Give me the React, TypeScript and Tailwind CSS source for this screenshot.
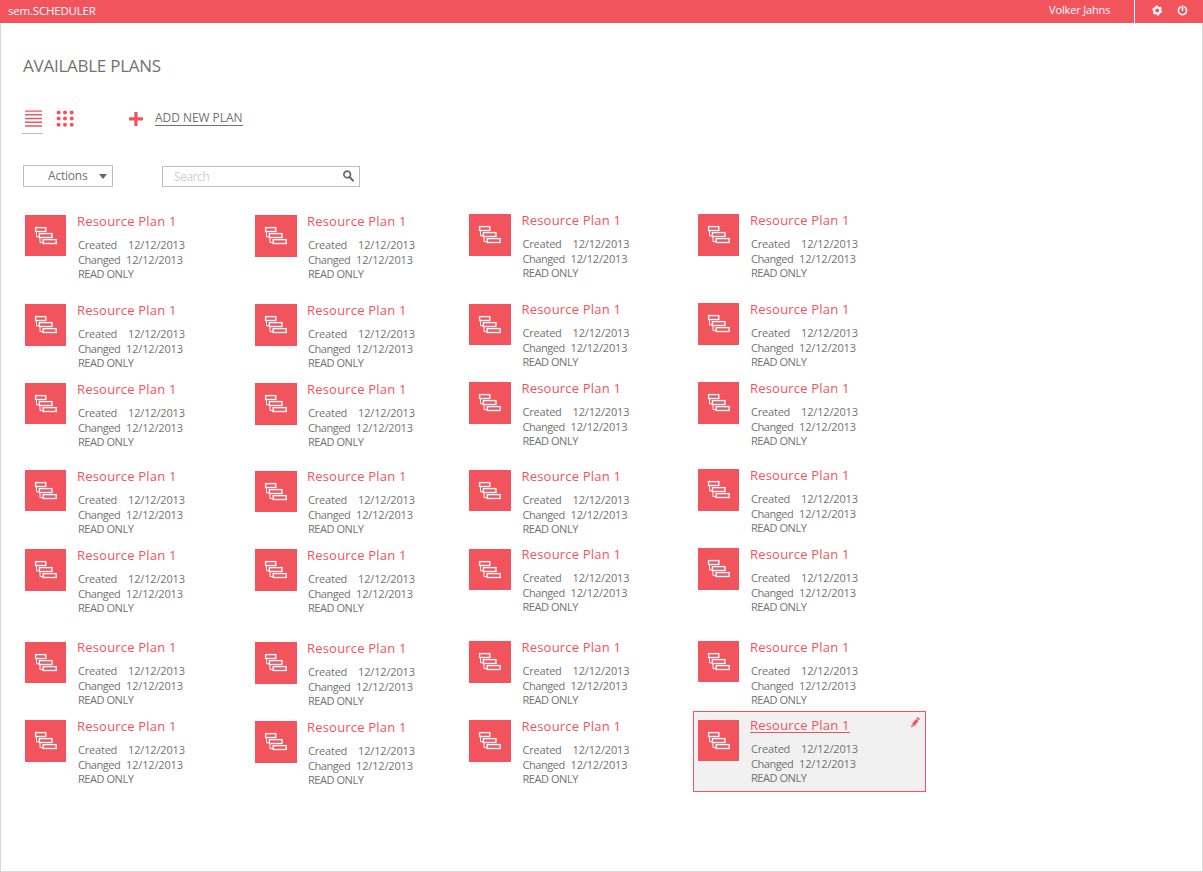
type Slot = { row: string; icon: string };

const columns: { wrap: string; text: string; slots: Slot[] }[] = [
  {
    wrap: "w-[230px] pt-px",
    text: "ml-[11px]",
    slots: [
      { row: "h-[89px]", icon: "h-[41px] w-[41px]" },
      { row: "h-[79px]", icon: "h-[42px] w-[41px]" },
      { row: "h-[87px]", icon: "h-[41px] w-[41px]" },
      { row: "h-[79px]", icon: "h-[41px] w-[41px]" },
      { row: "h-[92px]", icon: "h-[42px] w-[41px]" },
      { row: "h-[79px]", icon: "mt-px h-[41px] w-[41px]" },
      { row: "h-[79px]", icon: "h-[42px] w-[41px]" },
    ],
  },
  {
    wrap: "w-[214px] pt-px",
    text: "ml-[10px]",
    slots: [
      { row: "h-[89px]", icon: "h-[42px] w-[42px]" },
      { row: "h-[79px]", icon: "h-[42px] w-[42px]" },
      { row: "h-[87px]", icon: "h-[42px] w-[42px]" },
      { row: "h-[79px]", icon: "mt-px h-[41px] w-[42px]" },
      { row: "h-[93px]", icon: "h-[42px] w-[42px]" },
      { row: "h-[79px]", icon: "h-[42px] w-[42px]" },
      { row: "h-[79px]", icon: "h-[42px] w-[42px]" },
    ],
  },
  {
    wrap: "w-[229px]",
    text: "ml-[10.5px]",
    slots: [
      { row: "h-[89px]", icon: "h-[42px] w-[42px]" },
      { row: "h-[79px]", icon: "mt-px h-[41px] w-[42px]" },
      { row: "h-[88px]", icon: "h-[42px] w-[42px]" },
      { row: "h-[78px]", icon: "h-[41px] w-[42px]" },
      { row: "h-[93px]", icon: "mt-px h-[41px] w-[42px]" },
      { row: "h-[79px]", icon: "h-[42px] w-[42px]" },
      { row: "h-[79px]", icon: "h-[42px] w-[42px]" },
    ],
  },
  {
    wrap: "w-[233px]",
    text: "ml-[11px]",
    slots: [
      { row: "h-[89px]", icon: "h-[42px] w-[41px]" },
      { row: "h-[79px]", icon: "h-[42px] w-[41px]" },
      { row: "h-[87px]", icon: "h-[42px] w-[41px]" },
      { row: "h-[79px]", icon: "h-[42px] w-[41px]" },
      { row: "h-[93px]", icon: "h-[42px] w-[41px]" },
      { row: "h-[78px]", icon: "h-[41px] w-[41px]" },
      { row: "h-[81px]", icon: "h-[41px] w-[41px]" },
    ],
  },
];

function PlanIcon({ size }: { size: string }) {
  return (
    <div className={`${size} shrink-0 overflow-hidden bg-[#f2545e]`}>
      <svg width="42" height="42" viewBox="0 0 42 42" fill="none" stroke="#fff" strokeWidth="1.35">
        <path d="M11.5 17v4.8h3M15 23v4.6h3" strokeWidth="1" />
        <rect x="10.6" y="12.6" width="10.2" height="3.9" />
        <rect x="14.4" y="18.6" width="12.6" height="3.9" />
        <rect x="18.2" y="24.6" width="13" height="3.9" />
      </svg>
    </div>
  );
}

function Plan({ slot, text, selected }: { slot: Slot; text: string; selected: boolean }) {
  return (
    <article
      className={
        selected
          ? `${slot.row} relative -ml-[5px] -mt-2 flex w-[233px] border border-[#f2545e] bg-[#f1f1f1] pl-1 pt-2`
          : `${slot.row} flex`
      }
    >
      <PlanIcon size={slot.icon} />
      <div className={`${text} ${selected ? "-mt-px" : ""} text-[11px] text-[#727272]`}>
        <h2 className="h-[22px] whitespace-nowrap text-[13px] leading-[13px] tracking-[0.2px] text-[#f2545e]">
          <span className={selected ? "inline-block h-[14px] border-b border-[#f2545e]" : ""}>Resource Plan 1</span>
        </h2>
        <div className="ml-px flex h-[15px] leading-[15px]">
          <span className="w-[50px] tracking-[-0.2px]">Created</span>
          <span className="tracking-[-0.15px]">12/12/2013</span>
        </div>
        <div className="ml-px flex h-[15px] leading-[15px]">
          <span className="w-[48px] tracking-[-0.45px]">Changed</span>
          <span className="tracking-[-0.15px]">12/12/2013</span>
        </div>
        <div className="ml-px h-[15px] whitespace-nowrap leading-[14px] tracking-[-0.45px]">READ ONLY</div>
      </div>
      {selected && (
        <svg className="absolute right-[5px] top-[5px]" width="9" height="11" viewBox="0 0 9 11" fill="#f2545e">
          <path d="M5.4 1.4 6.4 0 9 1.9 8 3.3zM4.9 2 7.5 3.9 3.7 9 1 7zM.7 7.6 2.9 9.3.2 10.6z" />
        </svg>
      )}
    </article>
  );
}

export default function App() {
  return (
    <div className="flex h-[872px] w-[1203px] flex-col overflow-hidden bg-white font-['Open_Sans','Noto_Sans',sans-serif] text-[#727272]">
      <header className="flex h-[23px] shrink-0 items-center bg-[#f2545e] text-[11px] text-white">
        <span className="ml-[8px] pb-px text-[11.5px] tracking-[-0.2px]">sem.SCHEDULER</span>
        <span className="ml-auto w-[85px] pb-[2px] tracking-[-0.15px]">Volker Jahns</span>
        <div className="flex h-full w-[69px] items-center border-l border-white pb-[2px] pl-[17px]">
          <svg width="11" height="11" viewBox="0 0 11 11">
            <circle cx="5.2" cy="5.5" r="3" fill="none" stroke="#fff" strokeWidth="2" />
            <circle cx="5.2" cy="5.5" r="4.3" fill="none" stroke="#fff" strokeWidth="1.4" strokeDasharray="2.2 2.3" />
          </svg>
          <svg className="ml-[14px]" width="11" height="11" viewBox="0 0 11 11" fill="none" stroke="#fff" strokeWidth="1.6" strokeLinecap="round">
            <path d="M3.2 2.2a4.1 4.1 0 1 0 4.6 0M5.5 1v4.3" />
          </svg>
        </div>
      </header>
      <main className="flex grow flex-col border-x border-b border-[#d8d8d8]">
        <h1 className="ml-[22px] mt-[31px] h-6 text-[17px] leading-6 tracking-[-0.25px]">AVAILABLE PLANS</h1>
        <nav className="ml-[21px] mt-[27px] flex h-[29px]">
          <div className="flex h-[29px] w-[21px] justify-center border-b border-[#bdbdbd] pl-px pt-[5px]">
            <svg width="17" height="17" viewBox="0 0 17 17" fill="#f2545e">
              <path d="M0 .4h17v1.4H0zM0 4h17v1.6H0zM0 7.7h17v1.6H0zM0 11.4h17V13H0zM0 15.2h17v1.5H0z" />
            </svg>
          </div>
          <svg className="ml-[13px] mt-[5px]" width="19" height="18" viewBox="0 0 19 18" fill="#f2545e">
            {[2.6, 9, 15.7].map((x) => [2.5, 8.6, 14.7].map((y) => <circle key={`${x}-${y}`} cx={x} cy={y} r="2" />))}
          </svg>
          <svg className="ml-[54px] mt-[7px]" width="14" height="14" viewBox="0 0 14 14" fill="#f2545e">
            <path d="M5.3 0h3.2v5.2H14v3.3H8.5V14H5.3V8.5H0V5.2h5.3z" />
          </svg>
          <a className="ml-[12px] mt-[5px] h-[16px] whitespace-nowrap border-b border-[#727272] text-[12px] leading-[16px] tracking-[-0.05px]">ADD NEW PLAN</a>
        </nav>
        <div className="ml-[22px] mt-[31px] flex">
          <button className="flex h-[22px] w-[90px] items-center border border-[#bdbdbd] pl-[24px] text-[12px]">
            <span className="w-[51px] text-left leading-5 tracking-[-0.2px]">Actions</span>
            <svg width="8" height="5" viewBox="0 0 8 5" fill="#666">
              <path d="M0 0h8L4 5z" />
            </svg>
          </button>
          <div className="ml-[49px] mt-px flex h-[21px] w-[198px] items-center justify-between border border-[#bdbdbd] pl-[11px] pr-[5px] text-[12px] text-[#d0d0d0]">
            <span className="tracking-[-0.45px]">Search</span>
            <svg className="-mt-px" width="11" height="12" viewBox="0 0 11 12" fill="none" stroke="#666">
              <circle cx="4.2" cy="4.4" r="3.3" strokeWidth="1.7" />
              <path d="m6.8 7.2 3.2 3.4" strokeWidth="2.1" strokeLinecap="round" />
            </svg>
          </div>
        </div>
        <section className="ml-[24px] mt-[27px] flex">
          {columns.map((column, c) => (
            <div key={c} className={`${column.wrap} shrink-0`}>
              {column.slots.map((slot, r) => (
                <Plan key={r} slot={slot} text={column.text} selected={c === 3 && r === 6} />
              ))}
            </div>
          ))}
        </section>
      </main>
    </div>
  );
}
